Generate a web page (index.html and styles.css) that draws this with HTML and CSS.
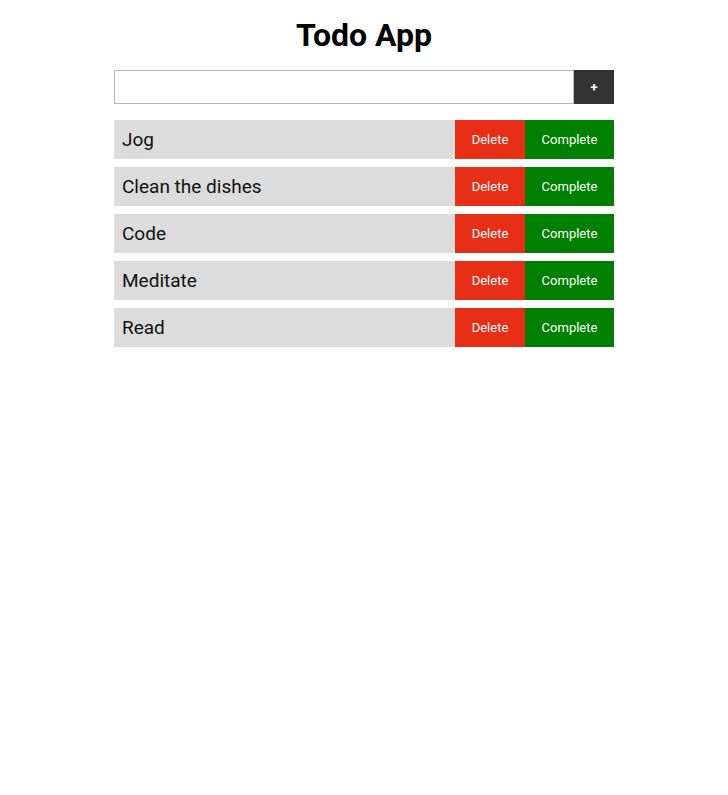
FILE: index.html
```html
<!DOCTYPE html>
<html lang="en">
<head>
<meta charset="utf-8">
<title>Todo App</title>
<link rel="stylesheet" href="styles.css">
</head>
<body>
<main class="app">
  <h1 class="title">Todo App</h1>
  <form class="add-form">
    <input class="add-input" type="text">
    <button class="add-btn" type="button">+</button>
  </form>
  <ul class="todo-list">
    <li class="todo"><span class="todo-text">Jog</span><button class="btn btn-delete" type="button">Delete</button><button class="btn btn-complete" type="button">Complete</button></li>
    <li class="todo"><span class="todo-text">Clean the dishes</span><button class="btn btn-delete" type="button">Delete</button><button class="btn btn-complete" type="button">Complete</button></li>
    <li class="todo"><span class="todo-text">Code</span><button class="btn btn-delete" type="button">Delete</button><button class="btn btn-complete" type="button">Complete</button></li>
    <li class="todo"><span class="todo-text">Meditate</span><button class="btn btn-delete" type="button">Delete</button><button class="btn btn-complete" type="button">Complete</button></li>
    <li class="todo"><span class="todo-text">Read</span><button class="btn btn-delete" type="button">Delete</button><button class="btn btn-complete" type="button">Complete</button></li>
  </ul>
</main>
</body>
</html>
```
FILE: styles.css
```css
* { box-sizing: border-box; }
body {
  margin: 0;
  background: #fff;
  font-family: Roboto, "Liberation Sans", Arial, sans-serif;
  color: #111;
}
.app {
  width: 500px;
  margin: 0 auto;
}
.title {
  margin: 16px 0;
  font-size: 32px;
  line-height: 38px;
  font-weight: 700;
  text-align: center;
  color: #000;
}
.add-form {
  display: flex;
  height: 34px;
  margin: 0;
}
.add-input {
  flex: 1;
  height: 34px;
  border: 1px solid #b8b8b8;
  margin: 0;
  padding: 0 8px;
  font-family: inherit;
  font-size: 16px;
  outline: none;
}
.add-btn {
  width: 40px;
  height: 34px;
  border: none;
  margin: 0;
  background: #333;
  color: #fff;
  font-family: inherit;
  font-size: 13px;
  font-weight: 700;
}
.todo-list {
  list-style: none;
  margin: 16px 0 0;
  padding: 0;
  display: flex;
  flex-direction: column;
  gap: 8px;
}
.todo {
  display: flex;
  height: 39px;
  background: #dcdcdc;
}
.todo-text {
  flex: 1;
  padding-left: 8px;
  font-size: 19px;
  line-height: 39px;
}
.btn {
  height: 39px;
  border: none;
  margin: 0;
  padding: 0;
  color: #fff;
  font-family: inherit;
  font-size: 13px;
  font-weight: 400;
}
.btn-delete {
  width: 70px;
  background: #e72e16;
}
.btn-complete {
  width: 89px;
  background: #008000;
}
```
